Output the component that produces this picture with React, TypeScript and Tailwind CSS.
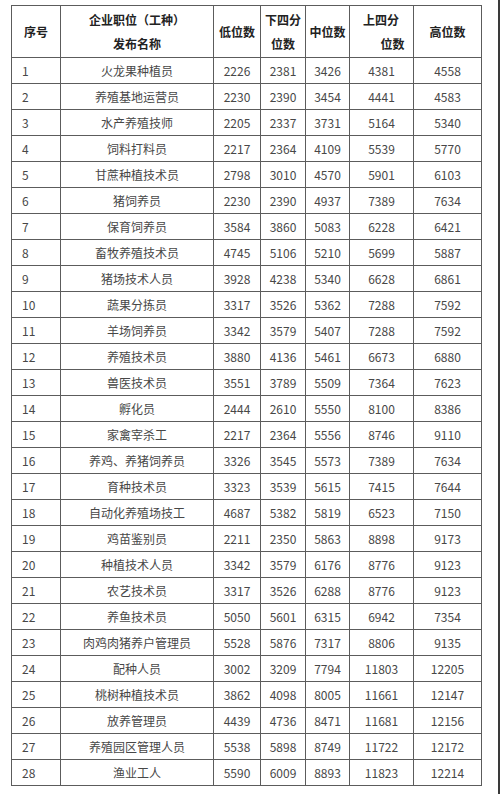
import React from "react";

type Row = [string, number, number, number, number, number];

const rows: Row[] = [
  ["火龙果种植员", 2226, 2381, 3426, 4381, 4558],
  ["养殖基地运营员", 2230, 2390, 3454, 4441, 4583],
  ["水产养殖技师", 2205, 2337, 3731, 5164, 5340],
  ["饲料打料员", 2217, 2364, 4109, 5539, 5770],
  ["甘蔗种植技术员", 2798, 3010, 4570, 5901, 6103],
  ["猪饲养员", 2230, 2390, 4937, 7389, 7634],
  ["保育饲养员", 3584, 3860, 5083, 6228, 6421],
  ["畜牧养殖技术员", 4745, 5106, 5210, 5699, 5887],
  ["猪场技术人员", 3928, 4238, 5340, 6628, 6861],
  ["蔬果分拣员", 3317, 3526, 5362, 7288, 7592],
  ["羊场饲养员", 3342, 3579, 5407, 7288, 7592],
  ["养殖技术员", 3880, 4136, 5461, 6673, 6880],
  ["兽医技术员", 3551, 3789, 5509, 7364, 7623],
  ["孵化员", 2444, 2610, 5550, 8100, 8386],
  ["家禽宰杀工", 2217, 2364, 5556, 8746, 9110],
  ["养鸡、养猪饲养员", 3326, 3545, 5573, 7389, 7634],
  ["育种技术员", 3323, 3539, 5615, 7415, 7644],
  ["自动化养殖场技工", 4687, 5382, 5819, 6523, 7150],
  ["鸡苗鉴别员", 2211, 2350, 5863, 8898, 9173],
  ["种植技术人员", 3342, 3579, 6176, 8776, 9123],
  ["农艺技术员", 3317, 3526, 6288, 8776, 9123],
  ["养鱼技术员", 5050, 5601, 6315, 6942, 7354],
  ["肉鸡肉猪养户管理员", 5528, 5876, 7317, 8806, 9135],
  ["配种人员", 3002, 3209, 7794, 11803, 12205],
  ["桃树种植技术员", 3862, 4098, 8005, 11661, 12147],
  ["放养管理员", 4439, 4736, 8471, 11681, 12156],
  ["养殖园区管理人员", 5538, 5898, 8749, 11722, 12172],
  ["渔业工人", 5590, 6009, 8893, 11823, 12214],
];

const cell = "border border-[#5c5c5c] p-0";

export default function App() {
  return (
    <div
      className="h-[794px] w-[500px] overflow-hidden border-r-2 border-[#3a3a3a] bg-white pl-[11px] pt-[5px] text-[12px] text-[#474747]"
      style={{ fontFamily: '"Noto Sans CJK SC", "Noto Sans", sans-serif' }}
    >
      <table className="w-[470px] table-fixed border-collapse">
        <colgroup>
          <col className="w-[49px]" />
          <col className="w-[153px]" />
          <col className="w-[47px]" />
          <col className="w-[45px]" />
          <col className="w-[44px]" />
          <col className="w-[64px]" />
          <col className="w-[68px]" />
        </colgroup>
        <thead>
          <tr className="h-[52px] text-[#222]">
            <th className={`${cell} text-center font-bold`}>序号</th>
            <th className={`${cell} text-center font-bold leading-[24px]`}>
              <div>企业职位（工种）</div>
              <div>发布名称</div>
            </th>
            <th className={`${cell} text-center font-bold`}>低位数</th>
            <th className={`${cell} text-center font-bold leading-[24px]`}>
              <div>下四分</div>
              <div>位数</div>
            </th>
            <th className={`${cell} text-center font-bold`}>中位数</th>
            <th className={`${cell} text-center font-bold leading-[24px]`}>
              <div className="pr-[1px]">上四分</div>
              <div className="pl-[22px]">位数</div>
            </th>
            <th className={`${cell} text-center font-bold`}>高位数</th>
          </tr>
        </thead>
        <tbody>
          {rows.map((r, i) => (
            <tr key={i} className="h-[26px]">
              <td className={`${cell} pl-[10px] text-left`}>{i + 1}</td>
              <td className={`${cell} text-center`}>{r[0]}</td>
              <td className={`${cell} text-center`}>{r[1]}</td>
              <td className={`${cell} text-center`}>{r[2]}</td>
              <td className={`${cell} text-center`}>{r[3]}</td>
              <td className={`${cell} text-center`}>{r[4]}</td>
              <td className={`${cell} text-center`}>{r[5]}</td>
            </tr>
          ))}
        </tbody>
      </table>
    </div>
  );
}
